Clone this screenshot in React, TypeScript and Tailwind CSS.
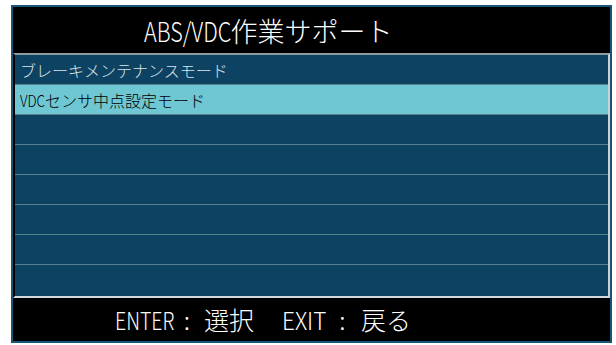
const font = { fontFamily: '"Noto Sans CJK JP", "DejaVu Sans", sans-serif' };

// condensed latin, like the unit's bitmap font
const Narrow = ({ text, w, scale }: { text: string; w: string; scale: string }) => (
  <span className={"inline-block whitespace-nowrap " + w}>
    <span className={"inline-block origin-left " + scale}>{text}</span>
  </span>
);

const rows = [
  <>ブレーキメンテナンスモード</>,
  <>
    <Narrow text="VDC" w="w-[25px]" scale="scale-x-[0.85]" />
    センサ中点設定モード
  </>,
  null, null, null, null, null, null,
];
const selected = 1;

export default function App() {
  return (
    <div className="w-[616px] h-[345px] bg-white pt-[5px] pl-[11px]" style={font}>
      <div className="w-[601px] h-[338px] border-2 border-[#1b5476] bg-black flex flex-col">
        <div className="h-[46px] flex items-center justify-center pr-[87px] text-white text-[27px] leading-none font-light">
          <Narrow text="ABS/VDC" w="w-[87px]" scale="scale-x-[0.8]" />
          作業サポート
        </div>
        <div className="h-[245px] border-2 border-t-[#8e9ba1] border-l-black border-r-[#c9d1d5] border-b-[#d2d8db] bg-[#0e4262] flex flex-col">
          {rows.map((r, i) => (
            <div
              key={i}
              className={
                "h-[30px] shrink-0 flex items-center pl-[5px] text-[16px] leading-none font-light " +
                (i === selected ? "bg-[#6fc7d4] text-black " : "text-[#d9e4ea] ") +
                (i < rows.length - 1 ? "border-b border-[#56818f]" : "")
              }
            >
              {r}
            </div>
          ))}
        </div>
        <div className="flex-1 flex items-center justify-center pr-[97px] text-white text-[25px] leading-none font-light">
          <Narrow text="ENTER" w="w-[55px]" scale="scale-x-[0.78]" />
          <span className="w-[34px] text-center">:</span>
          <span>選択</span>
          <span className="w-[28px]" />
          <Narrow text="EXIT" w="w-[42px]" scale="scale-x-[0.9]" />
          <span className="w-[37px] text-center">:</span>
          <span>戻る</span>
        </div>
      </div>
    </div>
  );
}
